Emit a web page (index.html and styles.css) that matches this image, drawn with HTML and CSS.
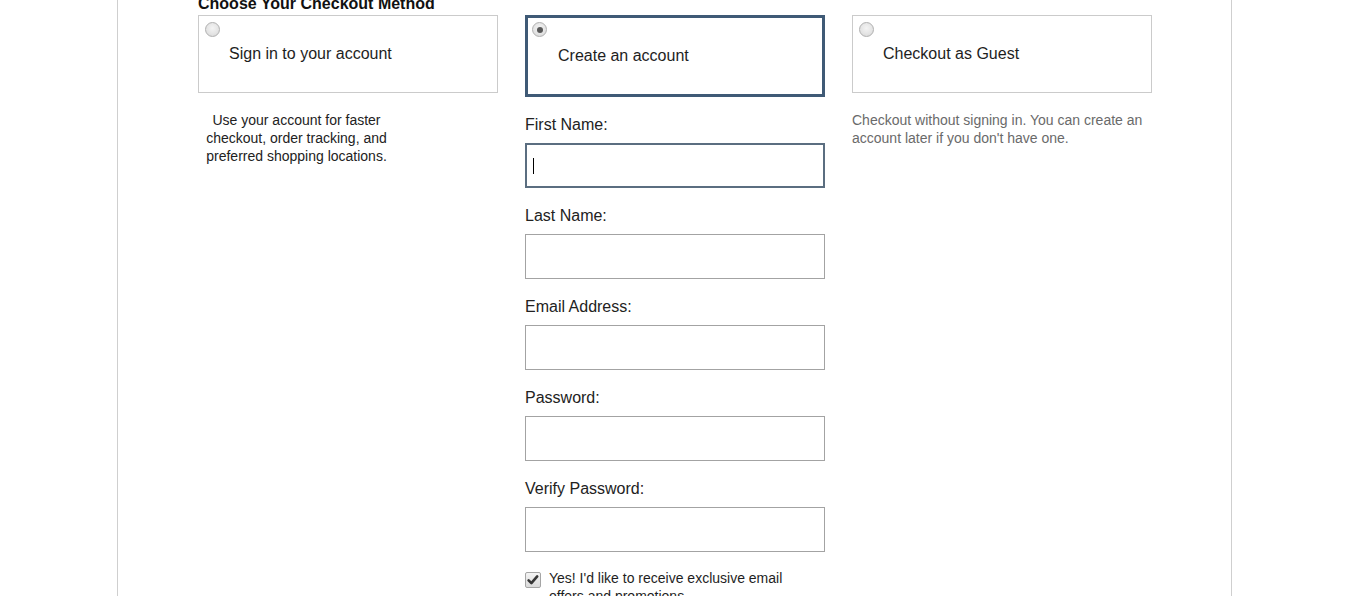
FILE: index.html
```html
<!DOCTYPE html>
<html lang="en">
<head>
<meta charset="utf-8">
<title>Choose Your Checkout Method</title>
<link rel="stylesheet" href="styles.css">
</head>
<body>
<div class="page">
  <h2 class="title">Choose Your Checkout Method</h2>
  <div class="methods">
    <div class="col">
      <div class="option">
        <span class="radio"></span>
        <div class="option-label">Sign in to your account</div>
      </div>
      <p class="desc desc--center">Use your account for faster checkout, order tracking, and preferred shopping locations.</p>
    </div>

    <div class="col">
      <div class="option option--active">
        <span class="radio radio--checked"></span>
        <div class="option-label">Create an account</div>
      </div>
      <div class="form">
        <div class="field">
          <div class="field-label">First Name:</div>
          <div class="input input--focus"><span class="caret"></span></div>
        </div>
        <div class="field">
          <div class="field-label">Last Name:</div>
          <div class="input"></div>
        </div>
        <div class="field">
          <div class="field-label">Email Address:</div>
          <div class="input"></div>
        </div>
        <div class="field">
          <div class="field-label">Password:</div>
          <div class="input"></div>
        </div>
        <div class="field field--last">
          <div class="field-label">Verify Password:</div>
          <div class="input"></div>
        </div>
        <div class="optin">
          <span class="checkbox">
            <svg width="14" height="14" viewBox="0 0 14 14"><path d="M2.6 7.4 L5.4 10.2 L11.2 3.4" fill="none" stroke="#363636" stroke-width="2.6" stroke-linecap="round" stroke-linejoin="round"/></svg>
          </span>
          <span class="optin-text">Yes! I'd like to receive exclusive email offers and promotions.</span>
        </div>
      </div>
    </div>

    <div class="col">
      <div class="option">
        <span class="radio"></span>
        <div class="option-label">Checkout as Guest</div>
      </div>
      <p class="desc desc--muted">Checkout without signing in. You can create an account later if you don't have one.</p>
    </div>
  </div>
</div>
</body>
</html>
```

FILE: styles.css
```css
* {
  box-sizing: border-box;
}

html, body {
  margin: 0;
  padding: 0;
  background: #fff;
}

body {
  font-family: "Liberation Sans", Arial, sans-serif;
  color: #222;
  overflow: hidden;
}

.page {
  display: flex;
  flex-direction: column;
  margin-left: 117px;
  width: 1115px;
  min-height: 100vh;
  border-left: 1px solid #cfcfcf;
  border-right: 1px solid #cfcfcf;
  padding-left: 80px;
}

.title {
  margin: -5px 0 2px 0;
  font-size: 16px;
  line-height: 18px;
  font-weight: bold;
  color: #111;
}

.methods {
  display: grid;
  grid-template-columns: 300px 300px 300px;
  column-gap: 27px;
  align-items: start;
}

.col {
  display: flex;
  flex-direction: column;
}

.option {
  height: 78px;
  border: 1px solid #cbcbcb;
  padding: 6px 0 0 6px;
  background: #fff;
}

.option--active {
  height: 82px;
  border: 3px solid #3f5a76;
  padding: 4px 0 0 4px;
}

.option-label {
  margin: 8px 0 0 24px;
  font-size: 16px;
  line-height: 18px;
  color: #1e1e1e;
}

.option--active .option-label {
  margin: 10px 0 0 26px;
}

.radio {
  display: block;
  width: 15px;
  height: 15px;
  border-radius: 50%;
  border: 1px solid #b0b0b0;
  background: radial-gradient(circle at 50% 40%, #f4f4f4 0%, #e3e3e3 60%, #d2d2d2 100%);
  position: relative;
}

.radio--checked::after {
  content: "";
  position: absolute;
  left: 3.5px;
  top: 3.5px;
  width: 6px;
  height: 6px;
  border-radius: 50%;
  background: #585858;
}

.desc {
  margin: 17px 0 0 0;
  font-size: 14px;
  line-height: 18px;
}

.desc--center {
  margin-left: 6px;
  padding-top: 1px;
  width: 185px;
  text-align: center;
  color: #222;
}

.desc--muted {
  padding-top: 1px;
  color: #6a6a6a;
}

.form {
  margin-top: 19px;
  display: flex;
  flex-direction: column;
}

.field {
  display: flex;
  flex-direction: column;
  margin-bottom: 19px;
}

.field--last {
  margin-bottom: 17px;
}

.field-label {
  font-size: 16px;
  line-height: 18px;
  margin-bottom: 9px;
  color: #222;
}

.input {
  height: 45px;
  border: 1px solid #a3a3a3;
  background: #fff;
  display: flex;
  align-items: center;
}

.input--focus {
  border: 2px solid #5b6e80;
  padding-left: 6px;
}

.caret {
  display: block;
  width: 1px;
  height: 16px;
  background: #000;
}

.optin {
  display: flex;
  align-items: flex-start;
}

.checkbox {
  flex: none;
  width: 16px;
  height: 16px;
  margin: 3px 0 0 0;
  border: 1px solid #a5a5a5;
  border-radius: 2px;
  background: linear-gradient(#f4f4f4, #dadada);
  display: flex;
  align-items: center;
  justify-content: center;
}

.optin-text {
  margin-left: 8px;
  max-width: 250px;
  font-size: 14px;
  line-height: 18px;
  color: #1e1e1e;
}
```
